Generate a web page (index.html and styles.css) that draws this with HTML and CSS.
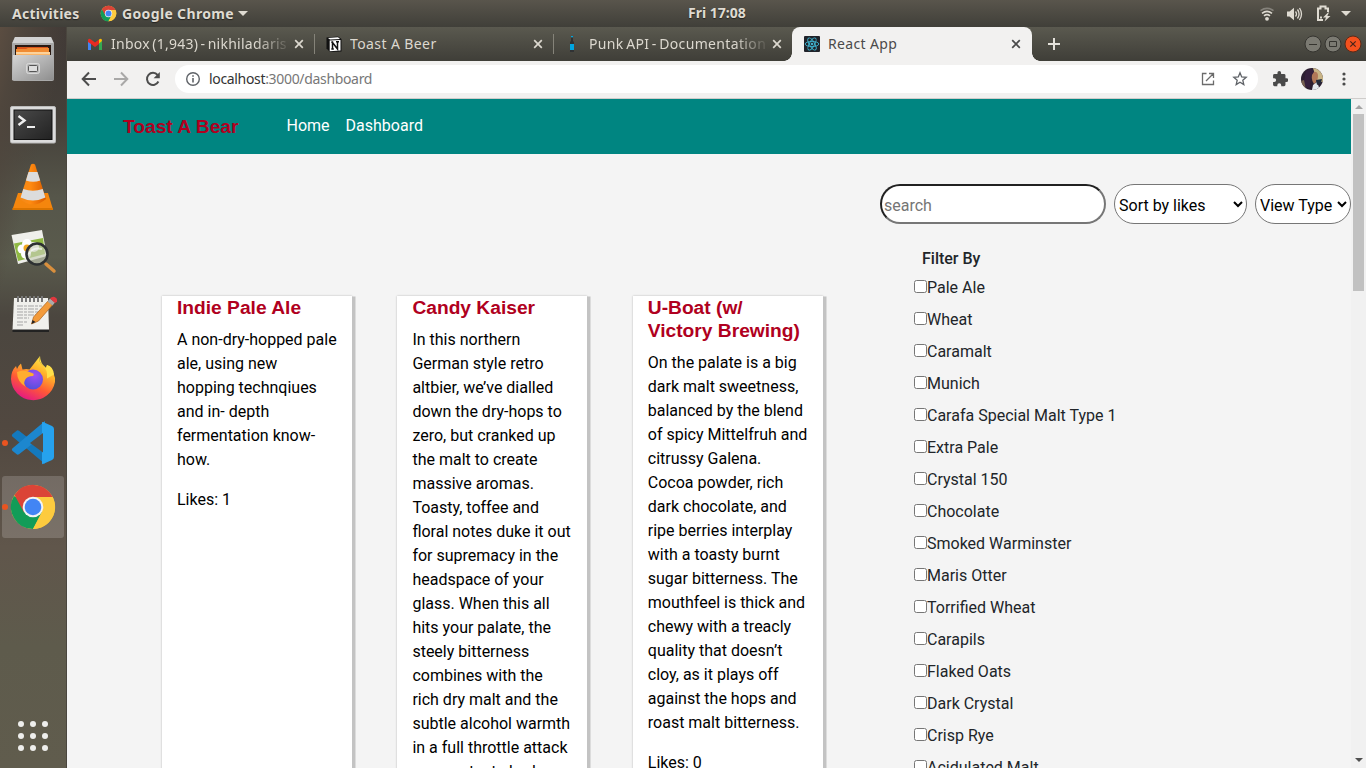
FILE: index.html
```html
<!DOCTYPE html>
<html lang="en">
<head>
<meta charset="utf-8">
<title>React App</title>
<link rel="stylesheet" href="styles.css">
</head>
<body>
<svg width="0" height="0" class="defs">
  <defs>
    <linearGradient id="metal" x1="0" y1="0" x2="1" y2="1"><stop offset="0" stop-color="#d6d6d6"/><stop offset="1" stop-color="#8e8e8e"/></linearGradient>
    <linearGradient id="screen" x1="0" y1="0" x2="1" y2="1"><stop offset="0" stop-color="#4a4a4a"/><stop offset="1" stop-color="#222"/></linearGradient>
    <linearGradient id="cone" x1="0" y1="0" x2="1" y2="0"><stop offset="0" stop-color="#f08a1c"/><stop offset=".4" stop-color="#ff8a10"/><stop offset="1" stop-color="#d95c00"/></linearGradient>
    <linearGradient id="fox" x1=".8" y1="0" x2=".3" y2="1"><stop offset="0" stop-color="#fff44f"/><stop offset=".35" stop-color="#ffb02a"/><stop offset=".65" stop-color="#ff5a35"/><stop offset="1" stop-color="#e31587"/></linearGradient>
    <radialGradient id="globe" cx=".6" cy=".3" r=".8"><stop offset="0" stop-color="#a04ef5"/><stop offset="1" stop-color="#4a50d8"/></radialGradient>
    <symbol id="chrome" viewBox="0 0 48 48">
      <circle cx="24" cy="24" r="22" fill="#fbc93b"/>
      <path d="M24 24L4.900 13A22 22 0 0 0 24 46L33.500 29z" fill="#129c58"/>
      <path d="M24 14H43.700A22 22 0 0 0 5.500 12L15 29.500z" fill="#db4437"/>
      <path d="M43.700 14A22 22 0 0 1 24 46L32.700 29 24 14z" fill="#fdcb3f"/>
      <circle cx="24" cy="24" r="10.300" fill="#f4f4f4"/><circle cx="24" cy="24" r="8.300" fill="#4285f4"/>
    </symbol>
    <symbol id="x" viewBox="0 0 12 12"><path d="M2.200 2.200l7.600 7.600M9.800 2.200l-7.600 7.600" stroke="currentColor" stroke-width="1.700" fill="none"/></symbol>
  </defs>
</svg>

<header class="topbar">
  <span class="activities">Activities</span>
  <svg class="tb-chrome" width="17" height="17"><use href="#chrome"/></svg>
  <span class="appname">Google Chrome</span>
  <i class="caret"></i>
  <span class="clock">Fri 17:08</span>
  <div class="tray">
    <svg width="16" height="16" viewBox="0 0 16 16" fill="none" stroke-width="1.600"><path d="M1.500 4.600Q8 .2 14.500 4.600" stroke="#85827b"/><path d="M3 7.300Q8 3.400 13 7.300M5 9.900Q8 7.400 11 9.900" stroke="#dfdbd2"/><circle cx="8" cy="12.800" r="1.900" fill="#dfdbd2"/></svg>
    <svg width="16" height="16" viewBox="0 0 16 16"><path d="M0 5.500h2.500L7 1.800v12.400L2.500 10.500H0z" fill="#dfdbd2"/><path d="M8.500 5.500q2 2.500 0 5M10.500 3.500q3.200 4.500 0 9M12.500 2q4 6 0 12" stroke="#dfdbd2" stroke-width="1.300" fill="none"/></svg>
    <svg width="16" height="17" viewBox="0 0 16 17"><path d="M8 15H3V3.500h2.500V1.500h5v2H13V7" stroke="#dfdbd2" stroke-width="2" fill="none"/><path d="M5 11.500h2v2H5zM13 7.500L8 12.500h3L9.500 16.500l6-5.500h-3.200l1.700-3.500z" fill="#dfdbd2"/></svg>
    <i class="caret"></i>
  </div>
</header>

<div class="desktop">
  <aside class="dock">
    <div class="slot"><svg width="48" height="48"><path d="M6 2h36l3 6v36a2 2 0 0 1-2 2H5a2 2 0 0 1-2-2V8z" fill="#a9a9a9"/><path d="M6 2h36l2.500 6h-41z" fill="#d2d2d2"/><path d="M6 10h36v12H6z" fill="#2b1a12"/><path d="M8 12h31v6H8z" fill="#d9541a"/><path d="M7 14h10l2-1h21v7H7z" fill="#f08b32"/><path d="M7 17h34v5H7z" fill="#f9b467"/><path d="M7 18h34" stroke="#fff0d0"/><path d="M4 20h40l1 25H3z" fill="url(#metal)"/><rect x="17.500" y="28.500" width="13" height="10" rx="2" fill="#bbb" stroke="#d9d9d9"/><rect x="19.500" y="30.500" width="9" height="6" rx="1" fill="#ddd" stroke="#555"/></svg></div>
    <div class="slot"><svg width="48" height="48"><rect x="1.500" y="7.500" width="45" height="36.500" rx="1.500" fill="#dcdcdc" stroke="#bbb"/><rect x="5" y="11" width="38" height="29.500" fill="url(#screen)" stroke="#111"/><path d="M9.500 17l6 4.500-6 4.500" fill="none" stroke="#eee" stroke-width="2.400"/><path d="M18 28h8" stroke="#eee" stroke-width="2"/></svg></div>
    <div class="slot"><svg width="48" height="48"><path d="M9 30h30l5 16.500H3.500z" fill="#f5860d"/><path d="M3.500 45h40.500v2H3.500z" fill="#d97400"/><path d="M22 1.500q2-1.500 4 0L37 36q-13 11-26 0z" fill="url(#cone)"/><path d="M19.500 9h9l2.700 8.500q-7 2.500-14.300 0z" fill="#dcdcdc"/><path d="M14.300 26q9.500 3.500 19.400 0l2.700 8.500q-12.500 6-24.800 0z" fill="#dcdcdc"/></svg></div>
    <div class="slot"><svg width="48" height="48"><path d="M2.500 8L33 3l5 26-29 8z" fill="#efefea"/><path d="M5 16.500L34 11l2 16-27 7z" fill="#8fb843"/><g fill="#fff"><circle cx="18" cy="17" r="5"/><circle cx="25" cy="20" r="5"/><circle cx="13" cy="22" r="4.500"/><circle cx="17" cy="27" r="5"/></g><circle cx="18" cy="21" r="3.500" fill="#f0a820"/><path d="M37 37l8 7" stroke="#d98f3d" stroke-width="3.500" stroke-linecap="round"/><circle cx="28" cy="27" r="10.500" fill="#c8ceb9" fill-opacity=".65" stroke="#2d3032" stroke-width="2.600"/><path d="M20 27q3-7 13-5" stroke="#fff" stroke-opacity=".6" stroke-width="2" fill="none"/></svg></div>
    <div class="slot"><svg width="48" height="48"><path d="M5 7h34l1 32H3.500z" fill="#f0f0ec"/><path d="M3.500 38.500H40v2.500H3.500z" fill="#222"/><path d="M9 5v6M13 5v6M17 5v6M21 5v6M25 5v6M29 5v6M33 5v6" stroke="#777" stroke-width="2"/><path d="M8 15h25M8 18h21M8 21h23M8 24h19M8 27h12M8 31h11M8 34h7" stroke="#a5a5a5" stroke-dasharray="6 1 3 1"/><path d="M22.500 33l2-7L39 10l4.500 4-14 16z" fill="#f39b3a" stroke="#a9601c" stroke-width=".7"/><path d="M22.500 33l1-4 3 2z" fill="#222"/><path d="M38.500 10.500l2.500-3 5 4-2.500 3z" fill="#aaa"/><path d="M41 7.500q3-3 6-.5t-1 5z" fill="#e2383f"/></svg></div>
    <div class="slot"><svg width="48" height="48"><path d="M31 1q-2 5 2 8.500l4 3.500 1-3q9 8 8 17A22.200 22.200 0 0 1 2 24q0-8 5-13l1 3q1-3 4-5.500l1.500 6q4-1 7 0z" fill="url(#fox)"/><circle cx="24" cy="24.500" r="10" fill="url(#globe)"/><path d="M8 17q7-3 15 1 3 1 1 3-6 0-8 4-2 4 1 7-9-5-9-15z" fill="#ffad2f"/><path d="M31 1q-2 5 2 8.500 6 5 5 14l7-4Q44 11 38 10l-1 3Q31 8 31 1z" fill="#ffe04a"/></svg></div>
    <div class="slot"><i class="dot"></i><svg width="48" height="48"><path d="M3 15.500l5-4q1-.4 2 .3L36 32v13L3.300 17.500q-1-1 0-2z" fill="#1479bd"/><path d="M3 31.500l5 4q1 .4 2-.3L36 15V2L3.300 29.500q-1 1 0 2z" fill="#1c87cf"/><path d="M34 3l9 4q2 1 2 3v28q0 2-2 3l-9 4q-1 .5-1-1V4q0-1.500 1-1z" fill="#26a2ee"/><path d="M34 14v19.500L21 24z" fill="#554f48"/></svg></div>
    <div class="slot on"><i class="dot"></i><svg width="48" height="48"><use href="#chrome"/></svg></div>
    <svg class="apps" width="32" height="32" fill="#eeeeec"><circle cx="4" cy="4" r="3"/><circle cx="16" cy="4" r="3"/><circle cx="28" cy="4" r="3"/><circle cx="4" cy="16" r="3"/><circle cx="16" cy="16" r="3"/><circle cx="28" cy="16" r="3"/><circle cx="4" cy="28" r="3"/><circle cx="16" cy="28" r="3"/><circle cx="28" cy="28" r="3"/></svg>
  </aside>

  <div class="window">
    <div class="tabs">
      <div class="tab">
        <svg width="16" height="16"><path d="M1 14V4.500l3 2V14z" fill="#4285f4"/><path d="M12 14V6.500l3-2V14z" fill="#34a853"/><path d="M12 3.500q3-2 3 1.500l-3 2.500z" fill="#fbbc04"/><path d="M1 5q0-3.500 3-1.500l4 3 4-3V8l-4 3-4-3-3-2z" fill="#ea2a22"/></svg>
        <span class="t1">Inbox (1,943) - nikhiladaris</span><svg class="close" width="12" height="12"><use href="#x"/></svg>
      </div>
      <div class="tab">
        <svg width="16" height="16"><path d="M.5 1.500L12 .5l3.500 2.500v12.500L4 16 .5 12.500z" fill="#111"/><path d="M2 2l10-.7L14 3 4 3.500z" fill="#fff"/><path d="M3.700 4.600l10.800-.7v10.700l-10.800.6z" fill="#fff"/><path d="M6.500 13V6.500L11.500 13V5.800M5.300 6.300h2M5.300 13h2.500M10 5.800h3" stroke="#111" stroke-width="1.500" fill="none"/></svg>
        <span class="t2">Toast A Beer</span><svg class="close" width="12" height="12"><use href="#x"/></svg>
      </div>
      <div class="tab last">
        <svg width="16" height="16"><path d="M6 0h2v1.500H6zM5 8h4v6H5z" fill="#00a5e0"/><path d="M6 1.500h2V5l1 1v2H5V6l1-1zM5 14h4v2H5z" fill="#303234"/></svg>
        <span class="t3">Punk API - Documentation</span><svg class="close" width="12" height="12"><use href="#x"/></svg>
      </div>
      <div class="tab active">
        <svg width="16" height="16"><rect width="16" height="16" rx="1" fill="#20232a"/><g transform="translate(8 8) rotate(0)" fill="none" stroke="#3fb6d3" stroke-width=".9"><ellipse rx="6.800" ry="2.600"/><ellipse rx="6.800" ry="2.600" transform="rotate(60)"/><ellipse rx="6.800" ry="2.600" transform="rotate(120)"/><circle r=".9" fill="#61dafb"/></g></svg>
        <span class="t4">React App</span><svg class="close" width="12" height="12"><use href="#x"/></svg>
      </div>
      <svg class="plus" width="12" height="12"><path d="M6 0v12M0 6h12" stroke="#e4e1da" stroke-width="2"/></svg>
      <div class="winbtns">
        <svg width="18" height="18"><circle cx="9" cy="9" r="8" fill="#7b7a72" stroke="#35342f"/><path d="M5 9.500h8" stroke="#35342f"/></svg>
        <svg width="18" height="18"><circle cx="9" cy="9" r="8" fill="#7b7a72" stroke="#35342f"/><path d="M5.500 6.500h7v5h-7z" stroke="#35342f" fill="none"/></svg>
        <svg width="18" height="18"><circle cx="9" cy="9" r="8" fill="#f4511e" stroke="#5a2a18"/><path d="M6.300 6.300l5.400 5.400M11.700 6.300l-5.400 5.400" stroke="#46241a" stroke-width="1.200"/></svg>
      </div>
    </div>

    <div class="toolbar">
      <svg class="back" width="16" height="16" fill="none" stroke="#4d4d4d" stroke-width="2"><path d="M15 8H2M8 1.500L1.700 8 8 14.500"/></svg>
      <svg class="fwd" width="16" height="16" fill="none" stroke="#a9a8a7" stroke-width="2"><path d="M1 8h13M8 1.500L14.300 8 8 14.500"/></svg>
      <svg class="reload" width="16" height="16"><path d="M13.400 10.500A6 6 0 1 1 12.600 4" fill="none" stroke="#4d4d4d" stroke-width="2"/><path d="M14.800 1v6.200H8.600z" fill="#4d4d4d"/></svg>
      <div class="omnibox">
        <svg width="16" height="16" fill="none" stroke="#5f6368" stroke-width="1.400"><circle cx="8" cy="8" r="6.300"/><path d="M8 7v4.500M8 4.200v1.600" stroke-width="1.600"/></svg>
        <span class="url">localhost<span>:3000/dashboard</span></span>
        <svg class="open" width="14" height="14" fill="none" stroke="#6b6b6b" stroke-width="1.300"><path d="M5.500 1.500h-4v11h11v-4M8 1.500h4.500V6M12.500 1.500L5 9"/></svg>
        <svg width="16" height="16" viewBox="0 0 16 16" fill="none" stroke="#5f6368" stroke-width="1.300"><path d="M8 1.800l1.700 4.100 4.500.4-3.400 2.900 1 4.400L8 11.300l-3.800 2.300 1-4.400-3.400-2.900 4.500-.4z"/></svg>
      </div>
      <svg class="puzzle" width="16" height="16" viewBox="1 1 21 22"><path d="M20.500 11H19V7a2 2 0 0 0-2-2h-4V3.500a2.500 2.500 0 0 0-5 0V5H4a2 2 0 0 0-2 2v3.800h1.500a2.700 2.700 0 0 1 0 5.400H2V20a2 2 0 0 0 2 2h3.800v-1.500a2.700 2.700 0 0 1 5.400 0V22H17a2 2 0 0 0 2-2v-4h1.500a2.500 2.500 0 0 0 0-5z" fill="#4a4a4a"/></svg>
      <svg class="avatar" width="22" height="22"><clipPath id="av"><circle cx="11" cy="11" r="11"/></clipPath><g clip-path="url(#av)"><path d="M0 0h22v22H0z" fill="#2c1f31"/><path d="M12 0h10v14h-6z" fill="#c9b486"/><path d="M12 4q5-1 5 4t-4 8q-4-6-1-12z" fill="#b17758"/><path d="M5 3q7-4 8 1l-3 4-1 12-7-2z" fill="#35203d"/><path d="M12 17l4-3 3 8h-8z" fill="#e4e8ee"/><path d="M15 12l6-1-1 4-4 2z" fill="#222b3c"/><path d="M0 13l3-1 2 10H0z" fill="#756050"/></g></svg>
      <svg class="more" width="4" height="14" fill="#4a4a4a"><circle cx="2" cy="2" r="1.600"/><circle cx="2" cy="7" r="1.600"/><circle cx="2" cy="12" r="1.600"/></svg>
    </div>

    <div class="viewport">
      <div class="page">
        <nav class="nav"><b class="brand">Toast A Bear</b><a>Home</a><a>Dashboard</a></nav>
        <div class="controls">
          <input class="search" type="text" placeholder="search">
          <select class="sort"><option>Sort by likes</option></select>
          <select class="view"><option>View Type</option></select>
        </div>
        <div class="content">
          <div class="cards">
            <article class="card"><h5>Indie Pale Ale</h5><p>A non-dry-hopped pale ale, using new hopping technqiues and in- depth fermentation know-how.</p><p>Likes: 1</p></article>
            <article class="card"><h5>Candy Kaiser</h5><p>In this northern German style retro altbier, we’ve dialled down the dry-hops to zero, but cranked up the malt to create massive aromas. Toasty, toffee and floral notes duke it out for supremacy in the headspace of your glass. When this all hits your palate, the steely bitterness combines with the rich dry malt and the subtle alcohol warmth in a full throttle attack on your taste buds.</p></article>
            <article class="card"><h5>U-Boat (w/ Victory Brewing)</h5><p>On the palate is a big dark malt sweetness, balanced by the blend of spicy Mittelfruh and citrussy Galena. Cocoa powder, rich dark chocolate, and ripe berries interplay with a toasty burnt sugar bitterness. The mouthfeel is thick and chewy with a treacly quality that doesn’t cloy, as it plays off against the hops and roast malt bitterness.</p><p>Likes: 0</p></article>
          </div>
          <div class="filters">
            <div class="ftitle">Filter By</div>
            <label><input type="checkbox">Pale Ale</label>
            <label><input type="checkbox">Wheat</label>
            <label><input type="checkbox">Caramalt</label>
            <label><input type="checkbox">Munich</label>
            <label><input type="checkbox">Carafa Special Malt Type 1</label>
            <label><input type="checkbox">Extra Pale</label>
            <label><input type="checkbox">Crystal 150</label>
            <label><input type="checkbox">Chocolate</label>
            <label><input type="checkbox">Smoked Warminster</label>
            <label><input type="checkbox">Maris Otter</label>
            <label><input type="checkbox">Torrified Wheat</label>
            <label><input type="checkbox">Carapils</label>
            <label><input type="checkbox">Flaked Oats</label>
            <label><input type="checkbox">Dark Crystal</label>
            <label><input type="checkbox">Crisp Rye</label>
            <label><input type="checkbox">Acidulated Malt</label>
          </div>
        </div>
      </div>
      <div class="scrollbar"><i class="up"></i><i class="thumb"></i><i class="down"></i></div>
    </div>
  </div>
</div>
</body>
</html>
```
FILE: styles.css
```css
* { box-sizing: border-box; }
body { margin: 0; width: 1366px; height: 768px; overflow: hidden; display: flex; flex-direction: column; font-family: Roboto, sans-serif; background: #f4f4f4; }
svg { display: block; flex: none; }
.defs { position: absolute; }

.topbar { height: 27px; flex: none; display: flex; align-items: center; position: relative; padding-left: 12px; background: linear-gradient(#59554c, #403f39); color: #dfdbd2; font: bold 14px/27px "Noto Sans", sans-serif; text-shadow: 0 1px 1px rgba(0,0,0,.5); }
.activities { width: 88px; letter-spacing: .25px; white-space: nowrap; }
.appname { margin-left: 5px; width: 111px; letter-spacing: .35px; white-space: nowrap; }
.caret { width: 0; height: 0; border: 5px solid transparent; border-top-color: #dfdbd2; border-bottom: 0; margin-left: 5px; }
.clock { position: absolute; left: 688px; letter-spacing: 0; top: -1px; }
.tray { margin-left: auto; display: flex; align-items: center; gap: 12px; padding-right: 15px; }
.tray .caret { margin: 0 0 0 -2px; }

.desktop { flex: 1; display: flex; min-height: 0; }
.dock { width: 67px; flex: none; position: relative; display: flex; flex-direction: column; background: linear-gradient(105deg, #5b4d41 0, #4f463d 22px, transparent 70px) 0 0/67px 320px no-repeat, linear-gradient(#403936 0, #443f39 90px, #56564a 170px, #5a5b4d 230px, #4b463f 290px, #514840 400px, #60564b 520px, #5e5b4c 620px, #605c4d); border-right: 1px solid #4a463e; }
.slot { height: 64px; flex: none; padding: 8px 0 0 9px; position: relative; }
.slot.on::before { content: ""; position: absolute; left: 2px; top: 1px; width: 62px; height: 62px; border-radius: 3px; background: rgba(255,255,255,.17); }
.slot svg { position: relative; }
.dot { position: absolute; left: 2px; top: 29px; width: 6px; height: 6px; border-radius: 50%; background: #e95420; }
.apps { margin: auto 0 16px 17px; }

.window { flex: 1; min-width: 0; display: flex; flex-direction: column; }
.tabs { height: 34px; flex: none; display: flex; padding-left: 8px; background: linear-gradient(#5a594f, #3f3e38); color: #dcd8cf; font: 14px/34px "Noto Sans", sans-serif; }
.tab { width: 239px; flex: none; display: flex; align-items: center; padding-left: 12px; position: relative; }
.tab:nth-child(-n+2)::after { content: ""; position: absolute; right: -1px; top: 7px; width: 1px; height: 20px; background: #858379; }
.tab span { width: 179px; margin-left: 8px; flex: none; overflow: hidden; white-space: nowrap; }
.tab .t1, .tab .t3 { -webkit-mask-image: linear-gradient(90deg, #000 145px, transparent 181px); mask-image: linear-gradient(90deg, #000 145px, transparent 181px); }
.tab .close { margin-left: 3px; }
.t1 { letter-spacing: .25px; word-spacing: -1.500px; }
.t2 { letter-spacing: .4px; }
.t3 { letter-spacing: .35px; word-spacing: -1.500px; }
.t4 { letter-spacing: .35px; }
.tab.active { width: 240px; background: #f2f1f0; color: #4a4a4a; border-radius: 8px 8px 0 0; }
.tab.active::before, .tab.active::after { content: ""; position: absolute; bottom: 0; width: 8px; height: 8px; }
.tab.active::before { left: -8px; background: radial-gradient(circle at 0 0, transparent 7.500px, #f2f1f0 8px); }
.tab.active::after { right: -8px; background: radial-gradient(circle at 100% 0, transparent 7.500px, #f2f1f0 8px); }
.plus { margin: 11px 0 0 16px; }
.winbtns { margin: 8px 4px 0 auto; display: flex; gap: 2px; }

.toolbar { height: 38px; flex: none; display: flex; align-items: center; padding: 0 20px 2px 14px; background: #f2f1f0; border-bottom: 1px solid #cfcdcb; }
.fwd, .reload { margin-left: 16px; }
.omnibox { margin-left: 14px; width: 1083px; height: 28px; flex: none; display: flex; align-items: center; padding: 0 10px; border-radius: 14px; background: #fff; }
.url { margin-left: 8px; font: 14px/28px "Noto Sans", sans-serif; letter-spacing: -.33px; color: #333; }
.url span { color: #777; }
.open { margin: 0 17px 0 auto; }
.puzzle { margin-left: 14px; }
.avatar { margin-left: 13px; }
.more { margin-left: 19px; }

.viewport { flex: 1; display: flex; min-height: 0; overflow: hidden; }
.page { flex: 1; overflow: hidden; background: #f4f4f4; color: #212529; font-size: 16px; line-height: 24px; }
.nav { height: 55px; display: flex; align-items: center; background: #008581; padding-left: 56px; color: #fff; }
.brand { width: 163.500px; color: #b00020; font: bold 19.200px/24px "Liberation Sans", Arial, sans-serif; }
.nav a { margin-right: 16px; margin-bottom: 2px; }
.controls { display: flex; justify-content: flex-end; gap: 8px; padding-top: 30px; height: 70px; }
.controls > * { height: 40px; border-radius: 20px; font: 16px Roboto, sans-serif; margin: 0; }
.search { width: 226px; border: 2px inset #767676; padding: 3px 2px 1px; }
.sort, .view { background-color: #fff; border: 1px solid #767676; color: #000; padding: 2px 0 0; }
.sort { width: 133px; }
.view { width: 96px; }
.content { display: flex; }
.cards { width: 847px; flex: none; display: flex; gap: 45.400px; padding: 72px 0 0 95px; color: #000; }
.card { width: 190px; flex: none; min-height: 600px; padding: 0 15px; background: #fff; box-shadow: 4px 0 0 -0.500px #c3c3c3, 0 0 2px rgba(0,0,0,.25); }
.card h5 { margin: 0 0 9px; color: #b00020; font: bold 19.200px/23px "Liberation Sans", Arial, sans-serif; }
.card p { margin: 0 0 16px; }
.filters { padding-top: 23px; }
.ftitle { margin: 0 0 5px 8px; font-weight: 500; }
.filters label { display: flex; margin-bottom: 8px; }
.filters input { width: 13px; height: 13px; margin: 4px 0 0; }

.scrollbar { width: 15px; flex: none; position: relative; background: #f1f1f1; display: flex; flex-direction: column; align-items: center; }
.up { margin-top: 6px; border: 4px solid transparent; border-top: 0; border-bottom-color: #a3a3a3; }
.thumb { margin-top: 5px; width: 11px; height: 177px; background: #c1c1c1; }
.down { margin: auto 0 6px; border: 4px solid transparent; border-bottom: 0; border-top-color: #505050; }
```
